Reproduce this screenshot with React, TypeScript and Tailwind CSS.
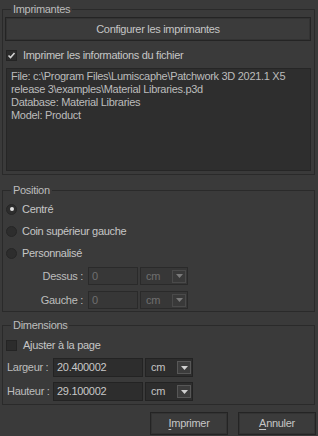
import React from 'react'

const Check = ({ checked }: { checked: boolean }) => (
  <span className="flex h-[11px] w-[11px] items-center justify-center border border-[#242424] bg-[#2c2c2c]">
    {checked && (
      <svg width="9" height="9" viewBox="0 0 9 9">
        <path d="M1.5 4.5 L3.5 6.5 L7.5 2" fill="none" stroke="#d2d2d2" strokeWidth="1.6" />
      </svg>
    )}
  </span>
)

const Radio = ({ on }: { on?: boolean }) => (
  <span className="flex h-[11px] w-[11px] items-center justify-center rounded-full border border-[#262626] bg-[#2d2d2d]">
    {on && <span className="h-[4px] w-[4px] rounded-full bg-[#e0e0e0]" />}
  </span>
)

const Select = ({ disabled }: { disabled?: boolean }) => (
  <div
    className={
      'flex h-full w-[48px] items-center justify-between border pl-[5px] pr-[1px] ' +
      (disabled ? 'border-[#2a2a2a] bg-[#373737] text-[#6f6f6f]' : 'border-[#232323] bg-[#2d2d2d] text-[#c4c4c4]')
    }
  >
    <span>cm</span>
    <span
      className={
        'flex h-[13px] w-[14px] items-center justify-center border ' +
        (disabled ? 'border-[#4a4a4a] bg-[#393939]' : 'border-[#575757] bg-[#3c3c3c]')
      }
    >
      <svg width="7" height="4" viewBox="0 0 7 4">
        <path d="M0 0 H7 L3.5 4 Z" fill={disabled ? '#7a7a7a' : '#d0d0d0'} />
      </svg>
    </span>
  </div>
)

const Legend = ({ children }: { children: React.ReactNode }) => (
  <legend className="ml-[5px] px-[2px] leading-[14px] text-[#bdbdbd]">{children}</legend>
)

export default function App() {
  return (
    <div className="flex h-[436px] w-[318px] flex-col bg-[#3a3a3a] px-[2px] [font-family:'Liberation_Sans',Arial,sans-serif] text-[11px] tracking-[-0.3px] text-[#c6c6c6]">
      {/* Imprimantes */}
      <fieldset className="mr-[1px] mt-[2px] flex flex-col border border-[#2a2a2a] px-[3px] pb-[3px]">
        <Legend>Imprimantes</Legend>
        <button className="-ml-px mt-[1px] h-[24px] border border-[#242424] bg-[#3b3b3b] text-[#c6c6c6] shadow-[inset_0_0_0_1px_#333]">
          Configurer les imprimantes
        </button>
        <label className="mt-[7px] flex h-[14px] items-center gap-[6px]">
          <Check checked />
          <span>Imprimer les informations du fichier</span>
        </label>
        <div className="mt-[6px] h-[103px] border border-[#262626] bg-[#2e2e2e] px-[4px] pt-[1px] leading-[13px] text-[#bcbcbc]">
          File: c:\Program Files\Lumiscaphe\Patchwork 3D 2021.1 X5
          <br />
          release 3\examples\Material Libraries.p3d
          <br />
          Database: Material Libraries
          <br />
          Model: Product
        </div>
      </fieldset>

      {/* Position */}
      <fieldset className="mr-[1px] mt-[8px] flex flex-col border border-[#2a2a2a] px-[3px] pb-[2px]">
        <Legend>Position</Legend>
        <div className="mt-[1px] flex h-[22px] items-center gap-[5px]">
          <Radio on />
          <span>Centré</span>
        </div>
        <div className="flex h-[22px] items-center gap-[5px]">
          <Radio />
          <span>Coin supérieur gauche</span>
        </div>
        <div className="flex h-[22px] items-center gap-[5px]">
          <Radio />
          <span>Personnalisé</span>
        </div>
        {['Dessus :', 'Gauche :'].map((l, i) => (
          <div key={l} className={'flex h-[18px] items-center ' + (i === 0 ? 'mt-[3px]' : 'mt-[6px]')}>
            <span className="w-[82px] pr-[5px] text-right text-[#bdbdbd]">{l}</span>
            <div className="flex h-full w-[50px] items-center border border-[#2a2a2a] bg-[#373737] px-[3px] text-[#6f6f6f]">0</div>
            <div className="ml-[2px] h-full">
              <Select disabled />
            </div>
          </div>
        ))}
      </fieldset>

      {/* Dimensions */}
      <fieldset className="mr-[1px] mt-[6px] flex flex-col border border-[#2a2a2a] px-[3px] pb-[3px]">
        <Legend>Dimensions</Legend>
        <label className="mt-[6px] flex h-[14px] items-center gap-[6px]">
          <Check checked={false} />
          <span>Ajuster à la page</span>
        </label>
        {[
          ['Largeur :', '20.400002'],
          ['Hauteur :', '29.100002'],
        ].map(([l, v], i) => (
          <div key={l} className={'flex h-[19px] items-center ' + (i === 0 ? 'mt-[6px]' : 'mt-[5px]')}>
            <span className="w-[47px] whitespace-nowrap pl-px text-[#bdbdbd]">{l}</span>
            <div className="flex h-full w-[90px] items-center border border-[#232323] bg-[#2d2d2d] px-[3px] text-[#c8c8c8]">
              {v}
            </div>
            <div className="ml-[2px] h-full">
              <Select />
            </div>
          </div>
        ))}
      </fieldset>

      <div className="mt-[7px] flex justify-end gap-[10px]">
        <button className="h-[23px] w-[78px] border border-[#242424] bg-[#3b3b3b] text-[#c6c6c6] shadow-[inset_0_0_0_1px_#333]">
          <span className="underline underline-offset-2">I</span>mprimer
        </button>
        <button className="h-[23px] w-[78px] border border-[#242424] bg-[#3b3b3b] text-[#c6c6c6] shadow-[inset_0_0_0_1px_#333]">
          <span className="underline underline-offset-2">A</span>nnuler
        </button>
      </div>
    </div>
  )
}
